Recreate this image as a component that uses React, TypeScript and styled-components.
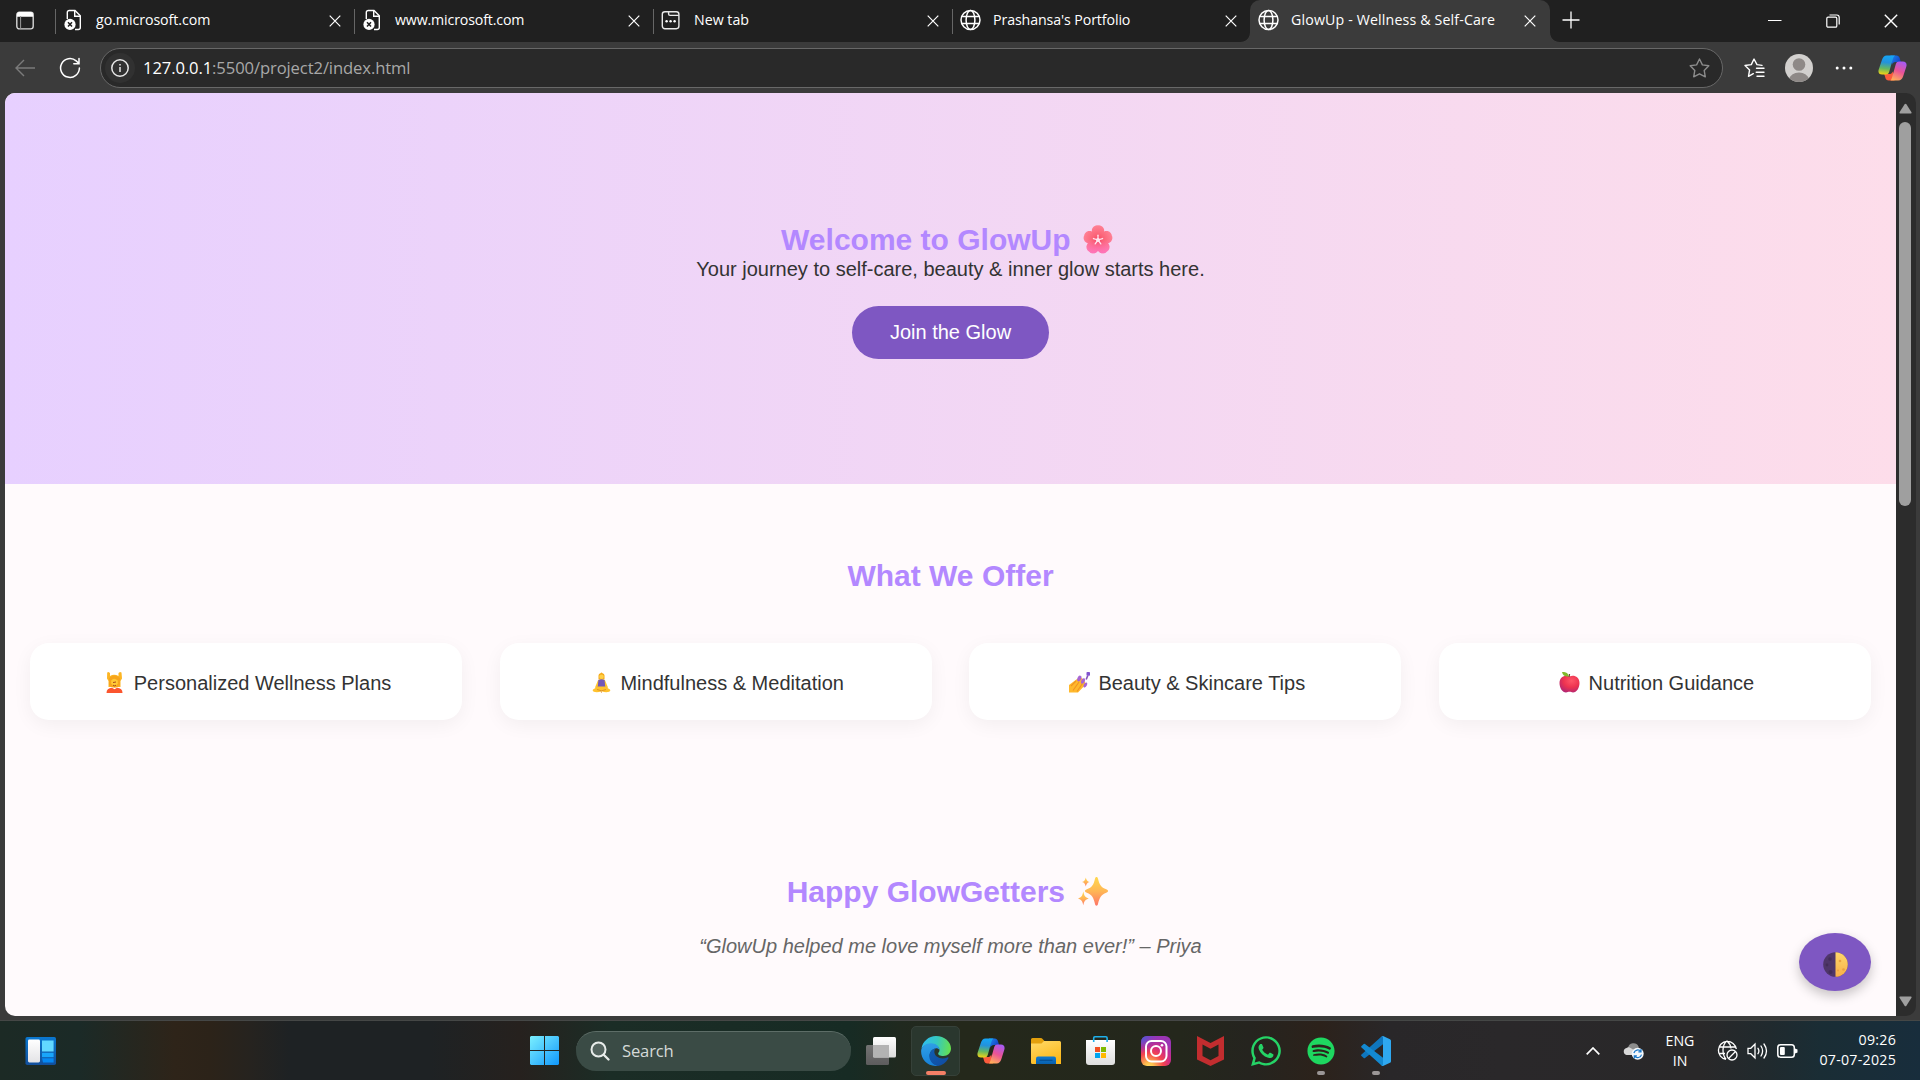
import React from 'react';
import styled, { createGlobalStyle } from 'styled-components';
import { FaWhatsapp, FaSpotify } from 'react-icons/fa';

const ui = "'Open Sans', 'Noto Sans', sans-serif";
const arial = "'Liberation Sans', Arial, sans-serif";

const Global = createGlobalStyle`
  * { box-sizing: border-box; }
  body { margin: 0; background: #3b3b3b; overflow: hidden; }
  h1, h2, p { margin: 0; }
  button { border: 0; padding: 0; background: none; font: inherit; color: inherit; }
  svg { display: block; flex: none; }
`;

const Screen = styled.div`
  width: 1920px;
  height: 1080px;
  display: flex;
  flex-direction: column;
  overflow: hidden;
  background: #3b3b3b;
`;

/* ---------- tab strip ---------- */
const TabStrip = styled.div`
  height: 42px;
  display: flex;
  background: #202020;
  color: #fff;
  font-family: ${ui};
`;
const TabActions = styled.div`
  width: 55px;
  height: 42px;
  padding: 11px 0 0 16px;
`;
const Tab = styled.div<{ $active?: boolean; $w: number }>`
  width: ${p => p.$w}px;
  height: 42px;
  display: flex;
  align-items: flex-start;
  padding-left: ${p => (p.$active ? 8 : 0)}px;
  background: ${p => (p.$active ? '#3b3b3b' : 'transparent')};
  border-radius: 10px 10px 0 0;
`;
const Divider = styled.i`
  width: 1px;
  height: 25px;
  margin: 9px 7px 0 0;
  background: #666;
`;
const Favicon = styled.span`
  width: 22px;
  padding-top: 9px;
`;
const TabTitle = styled.span<{ $ls?: number }>`
  flex: 1;
  margin-left: 11px;
  font-size: 14.2px;
  line-height: 20px;
  padding-top: 10px;
  white-space: nowrap;
  letter-spacing: ${p => p.$ls ?? 0}px;
`;
const TabClose = styled.button<{ $r?: number }>`
  padding-top: 15px;
  margin-right: ${p => p.$r ?? 13}px;
`;
const Flare = styled.i<{ $side: 'l' | 'r' }>`
  width: 9px;
  height: 42px;
  margin-left: ${p => (p.$side === 'l' ? -9 : 0)}px;
  background: radial-gradient(circle at ${p => (p.$side === 'l' ? '0' : '9px')} 0, #202020 8.4px, #3b3b3b 9.2px) bottom / 9px 9px no-repeat;
`;
const NewTab = styled.button`
  width: 20px;
  display: flex;
  align-items: flex-start;
  padding-top: 11px;
  margin-left: 3px;
`;
const WindowButtons = styled.div`
  margin-left: auto;
  display: flex;
  padding: 14px 22px 0 0;
  gap: 44px;
`;

/* ---------- address row ---------- */
const Toolbar = styled.div`
  height: 51px;
  display: flex;
  align-items: center;
  padding: 0 13px 0 15px;
  color: #fff;
`;
const NavButton = styled.button<{ $ml?: number }>`
  margin-left: ${p => p.$ml ?? 0}px;
`;
const AddressBar = styled.div`
  width: 1625px;
  height: 40px;
  margin-left: 19px;
  display: flex;
  align-items: center;
  border: 1.5px solid #686868;
  border-radius: 20px;
  background: #292929;
  padding: 0 12px 0 4px;
`;
const InfoBadge = styled.span`
  width: 30px;
  height: 30px;
  display: grid;
  place-items: center;
  border-radius: 50%;
  background: #313131;
`;
const Url = styled.span`
  flex: 1;
  margin-left: 8px;
  color: #a8a8a8;
  font: 16.6px/24px ${ui};
  letter-spacing: -0.1px;
  b { color: #fff; font-weight: 400; }
`;

/* ---------- web page ---------- */
const Viewport = styled.div`
  height: 923px;
  margin: 0 4px 0 5px;
  display: flex;
`;
const Page = styled.main`
  position: relative;
  width: 1891px;
  height: 923px;
  overflow: hidden;
  border-radius: 10px 0 0 10px;
  background: #fffafc;
  font-family: ${arial};
  font-size: 20px;
  line-height: 23px;
  color: #333;
  text-align: center;
`;
const Hero = styled.header`
  height: 391px;
  padding-top: 129px;
  display: flex;
  flex-direction: column;
  align-items: center;
  background: linear-gradient(to right, #e7d0ff, #fdddea);
`;
const Tagline = styled.p`
  margin-top: 1px;
`;
const Heading = styled.h1`
  display: flex;
  justify-content: center;
  height: 35px;
  font-size: 30px;
  line-height: 35px;
  font-weight: 700;
  color: #b388ff;
  white-space: pre;
`;
const HeadingEmoji = styled.span`
  width: 41px;
  display: flex;
  justify-content: center;
  padding: 3px 2px 0 0;
`;
const JoinButton = styled.button`
  width: 197px;
  height: 53px;
  margin-top: 25px;
  border-radius: 31px;
  background: #7e57c2;
  color: #fff;
`;
const Offers = styled.section`
  height: 315px;
  padding: 74px 25px 0;
`;
const CardGrid = styled.div`
  display: grid;
  grid-template-columns: repeat(4, 1fr);
  gap: 37.5px;
  margin-top: 50px;
`;
const Card = styled.div`
  height: 77px;
  display: flex;
  justify-content: center;
  align-items: center;
  padding-top: 3px;
  white-space: pre;
  background: #fff;
  border-radius: 19px;
  box-shadow: 0 5px 19px rgba(0, 0, 0, 0.05);
`;
const CardEmoji = styled.span`
  width: 27.4px;
  margin-top: -2px;
  display: flex;
  justify-content: center;
`;
const Testimonials = styled.section`
  padding-top: 75px;
`;
const Quote = styled.p`
  margin-top: 26px;
  font-style: italic;
  color: #666;
`;
const ThemeToggle = styled.button`
  position: absolute;
  right: 25px;
  bottom: 25px;
  width: 72px;
  height: 58px;
  display: grid;
  place-items: center;
  padding-top: 5px;
  border-radius: 50%;
  background: #7e57c2;
  box-shadow: 0 5px 12px rgba(0, 0, 0, 0.22);
`;
const Scrollbar = styled.div`
  width: 20px;
  height: 923px;
  display: flex;
  flex-direction: column;
  align-items: center;
  padding: 10px 2px 9px 0;
  background: #2c2c2c;
  border-radius: 0 10px 10px 0;
`;
const Thumb = styled.div`
  width: 12px;
  height: 384px;
  margin: 8px 0 auto;
  border-radius: 6px;
  background: #9f9f9f;
`;

/* ---------- taskbar ---------- */
const Taskbar = styled.footer`
  height: 60px;
  margin-top: 4px;
  display: flex;
  align-items: center;
  border-top: 1px solid #454746;
  font-family: ${ui};
  color: #fff;
  background: linear-gradient(to right, #1c2a25 0, #1b2a27 80px, #2e2419 175px, #2c2319 210px, #26231f 250px, #1e2224 290px, #1e2224 430px, #26211e 520px, #1b2d26 610px, #172b24 850px, #20291f 900px, #24281b 960px, #24271c 1180px, #25241f 1250px, #2c221b 1320px, #292729 1390px, #2a282a 1500px, #292829 1700px, #202a2e 1770px, #1a2d35 1820px, #182d3c 1920px);
`;
const Widgets = styled.div`
  width: 505px;
  padding-left: 25px;
`;
const StartButton = styled.button`
  width: 29px;
  margin: 0 17px 0 25px;
`;
const SearchBox = styled.div`
  width: 275px;
  height: 40px;
  display: flex;
  align-items: center;
  padding-left: 14px;
  border-radius: 20px;
  border-top: 1px solid #5d6d67;
  background: #3a4b45;
  color: #d5dad8;
  font-size: 16.6px;
  gap: 12px;
`;
const SearchLabel = styled.span`
  line-height: 22px;
  letter-spacing: -0.15px;
`;
const AppRow = styled.div`
  display: flex;
  margin-left: 2px;
`;
const AppCell = styled.div<{ $active?: boolean }>`
  width: 49px;
  height: 50px;
  margin: 0 3px;
  display: flex;
  flex-direction: column;
  align-items: center;
  padding-top: 9px;
  border: 1px solid ${p => (p.$active ? '#364139' : 'transparent')};
  border-radius: 5px;
  background: ${p => (p.$active ? '#2a372e' : 'transparent')};
`;
const IconSlot = styled.div`
  height: 30px;
  display: flex;
  align-items: center;
  justify-content: center;
`;
const Indicator = styled.i<{ $active?: boolean }>`
  width: ${p => (p.$active ? 20 : 8)}px;
  height: 4px;
  margin-top: 5px;
  border-radius: 2px;
  background: ${p => (p.$active ? '#f47f66' : '#9b9696')};
`;
const Tray = styled.div`
  margin-left: auto;
  display: flex;
  align-items: center;
  padding-right: 24px;
`;
const TrayText = styled.div<{ $w: number; $ml: number; $end?: boolean; $ls?: number }>`
  width: ${p => p.$w}px;
  margin: 0 0 ${p => (p.$end ? 1 : 0)}px ${p => p.$ml}px;
  font-size: 14.2px;
  line-height: 20px;
  text-align: ${p => (p.$end ? 'right' : 'center')};
  letter-spacing: ${p => p.$ls ?? 0}px;
  white-space: nowrap;
`;
const TrayIcon = styled.span<{ $ml: number }>`
  margin-left: ${p => p.$ml}px;
`;

/* ---------- line icons ---------- */
const Cross = ({ s = 12 }: { s?: number }) => (
  <svg width={s} height={s} viewBox="0 0 12 12" stroke="#fff" strokeWidth="1.2" fill="none">
    <path d="M.7.7l10.6 10.6M11.3.7L.7 11.3" />
  </svg>
);
const Globe = () => (
  <svg width="22" height="22" viewBox="0 0 22 22" stroke="#fff" strokeWidth="1.5" fill="none">
    <circle cx="10.500" cy="11" r="9.5" />
    <ellipse cx="10.500" cy="11" rx="4.4" ry="9.5" />
    <path d="M1.800 7.6h17.4M1.800 14.4h17.4" />
  </svg>
);
const BrokenPage = () => (
  <svg width="22" height="22" viewBox="0 0 22 22" fill="none">
    <path d="M4.3 10V3.5A2 2 0 0 1 6.3 1.5H12l5.300 5.3v11.7a2 2 0 0 1-2 2H12" stroke="#fff" strokeWidth="1.4" />
    <path d="M11.7 1.8v5.4h5.4" stroke="#fff" strokeWidth="1.4" />
    <circle cx="7" cy="15.4" r="5.6" fill="#fff" />
    <path d="M5 13.3l4 4.2M9 13.3l-4 4.2" stroke="#202020" strokeWidth="1.5" />
  </svg>
);
const NewTabPage = () => (
  <svg width="20" height="22" viewBox="0 0 20 22" stroke="#e8e8e8" strokeWidth="1.4" fill="none">
    <rect x="1.3" y="2.7" width="16.6" height="17" rx="2.6" />
    <path d="M7.6 2.7V5a1.4 1.4 0 0 0 1.4 1.4h8.8" />
    <g fill="#fff" stroke="none">
      <circle cx="5.6" cy="12.2" r="1.2" /><circle cx="9.6" cy="12.2" r="1.2" /><circle cx="13.6" cy="12.2" r="1.2" />
    </g>
  </svg>
);
const TabMenu = () => (
  <svg width="18" height="19" viewBox="0 0 18 19" fill="none">
    <rect x=".8" y="1.3" width="16.4" height="16.6" rx="2.6" stroke="#d6d6d6" strokeWidth="1.4" />
    <path d="M1 5.8V3.5A2.5 2.5 0 0 1 3.5 1h11A2.5 2.5 0 0 1 17 3.5v2.3z" fill="#fff" />
    <path d="M4.6 5v13" stroke="#9a9a9a" strokeWidth="1" />
  </svg>
);
const Star = ({ lines }: { lines?: boolean }) =>
  lines ? (
    <svg width="21" height="20" viewBox="0 0 21 20" fill="none" stroke="#fff" strokeWidth="1.4" strokeLinejoin="round" strokeLinecap="round">
      <path d="M18 7.400L13 6.6 10 1 7.3 6.6 1 7.5l4.6 4.4-1.1 6.4 4.800-2.600M12.500 10.200h7.500M12.200 14.300H20M13 18.300h7" />
    </svg>
  ) : (
    <svg width="21" height="20" viewBox="0 0 21 20" fill="none" stroke="#8c8c8c" strokeWidth="1.4" strokeLinejoin="round">
      <path d="M10.5 1l2.9 5.9 6.4.9-4.6 4.6 1.1 6.4-5.8-3-5.8 3 1.1-6.4L1.2 7.800l6.400-.9z" />
    </svg>
  );
const Avatar = () => (
  <svg width="28" height="28" viewBox="0 0 28 28">
    <clipPath id="av"><circle cx="14" cy="14" r="14" /></clipPath>
    <g clipPath="url(#av)">
      <rect width="28" height="28" fill="#d2d0ce" />
      <circle cx="14" cy="10.500" r="6.300" fill="#8e8987" />
      <ellipse cx="14" cy="25" rx="9.500" ry="6.500" fill="#8e8987" />
    </g>
  </svg>
);
const Arrow = ({ down }: { down?: boolean }) => (
  <svg width="13" height="11" viewBox="0 0 14 11" preserveAspectRatio="none">
    <path d={down ? 'M1 .5h12q1 .2.4 1.200L8 9.800q-1 1-2 0L.6 1.700Q0 .7 1 .5z' : 'M1 10.500h12q1-.2.4-1.200L8 1.200q-1-1-2 0L.6 9.300q-.6 1 .4 1.200z'} fill="#9f9f9f" />
  </svg>
);

/* ---------- brand icons ---------- */
const Copilot = ({ id, w = 28, h = 26 }: { id: string; w?: number; h?: number }) => (
  <svg width={w} height={h} viewBox="0 0 28 26" preserveAspectRatio="none">
    <defs>
      <linearGradient id={id + 'a'} x1=".4" y1="0" x2=".3" y2="1">
        <stop offset="0" stopColor="#15a5f5" /><stop offset=".35" stopColor="#2392dc" /><stop offset=".68" stopColor="#65b860" /><stop offset="1" stopColor="#f5d313" />
      </linearGradient>
      <linearGradient id={id + 'b'} x1=".7" y1="0" x2=".3" y2="1">
        <stop offset="0" stopColor="#a75af2" /><stop offset=".5" stopColor="#ea5396" /><stop offset="1" stopColor="#ffad5a" />
      </linearGradient>
      <linearGradient id={id + 'c'} x1="0" y1="0" x2="1" y2=".6">
        <stop offset="0" stopColor="#1c8bf0" /><stop offset="1" stopColor="#153fc4" />
      </linearGradient>
    </defs>
    <path d="M12 .5h5.800c1.600 0 2.600 1 3.100 2.600l1.200 4H17c-2 0-3 1-3.500 2.600z" fill={`url(#${id}c)`} />
    <path d="M16 25.500h-5.700c-1.800 0-2.700-1-3.200-2.700L6 19h4.500c2 0 3.200-1 3.700-2.600z" fill="#fb5b3c" />
    <path d="M16.500 .5H8.500C6 .5 4.600 2.500 3.800 5L.7 14.500C-.2 17.500 1 19.600 4 19.600h3.600c2 0 2.700-1.200 3.300-3l3.300-12C14.800 2.700 15.200 1.200 16.500 .5z" fill={`url(#${id}a)`} />
    <path d="M12 25.500h7.500c2.600 0 4-1.800 4.800-4.300l3-9.500c.9-3-.3-5.100-3.300-5.100h-3.600c-2 0-2.700 1.200-3.300 3l-3.300 12c-.5 1.800-.8 3.100-1.800 3.900z" fill={`url(#${id}b)`} />
  </svg>
);
const WidgetsIcon = () => (
  <svg width="31" height="28" viewBox="0 0 31 28">
    <defs>
      <linearGradient id="wg" x2="0" y2="1"><stop stopColor="#0a78d0" /><stop offset="1" stopColor="#124f9c" /></linearGradient>
      <linearGradient id="wh" x2="0" y2="1"><stop stopColor="#fff" /><stop offset="1" stopColor="#e3e3e6" /></linearGradient>
    </defs>
    <rect x=".5" width="30.500" height="28" rx="1.800" fill="url(#wg)" />
    <rect x="3" y="2.500" width="12" height="23" rx="1.400" fill="url(#wh)" />
    <path d="M17 3.500h11.600v11H17z" fill="#62d8ff" />
    <path d="M17 15.800h11.600v4.400H17z" fill="#19a5fb" />
    <path d="M17 21.300h11.600v4.200H18z" fill="#0588f3" />
  </svg>
);
const WindowsIcon = () => (
  <svg width="29" height="29" viewBox="0 0 29 29">
    <defs><linearGradient id="wn" gradientUnits="userSpaceOnUse" x1="0" y1="0" x2="29" y2="29"><stop stopColor="#7af0ff" /><stop offset=".5" stopColor="#48c4fd" /><stop offset="1" stopColor="#0f97fb" /></linearGradient></defs>
    <path d="M1 0h13v14H0V1zM15 0h13l1 1v13H15zM0 15h14v14H1l-1-1zM15 15h14v13l-1 1H15z" fill="url(#wn)" />
  </svg>
);
const TaskView = () => (
  <svg width="30" height="28" viewBox="0 0 30 28">
    <defs>
      <linearGradient id="tv" x2="0" y2="1"><stop stopColor="#fff" /><stop offset="1" stopColor="#dcdcdc" /></linearGradient>
      <linearGradient id="tw" x2="0" y2="1"><stop stopColor="#737373" /><stop offset="1" stopColor="#5d5c5d" /></linearGradient>
    </defs>
    <rect y="8" width="23" height="20" rx="1.500" fill="url(#tw)" />
    <rect x="7" width="23" height="20.500" rx="1.500" fill="url(#tv)" />
    <path d="M7 8h16v12.500H8.500a1.500 1.500 0 0 1-1.500-1.500z" fill="#b3b3b3" />
  </svg>
);
const EdgeIcon = () => (
  <svg width="30" height="30" viewBox="0 0 30 30">
    <defs>
      <linearGradient id="ea" x1="0" y1=".4" x2="1" y2=".5"><stop stopColor="#2fbcf2" /><stop offset=".5" stopColor="#35c8c0" /><stop offset="1" stopColor="#66e04e" /></linearGradient>
      <linearGradient id="eb" x1=".3" y1="0" x2=".4" y2="1"><stop stopColor="#30a0e6" /><stop offset="1" stopColor="#1680d8" /></linearGradient>
      <linearGradient id="ec" x1="0" y1="0" x2="1" y2="1"><stop stopColor="#0f5eb5" /><stop offset="1" stopColor="#114a9e" /></linearGradient>
    </defs>
    <path d="M.5 12.500C1.500 5.500 7.700 0 15 0c8.600 0 15 6 15 12.500 0 4.500-3.400 7.400-7.600 7.400-3.600 0-5.600-1.400-5.200-2.500.4-1 1.300-1.500 1.300-3.300 0-2.800-3-6.100-8-6.100C6 8 2.500 9.500.5 12.500z" fill="url(#ea)" />
    <path d="M.1 15C.5 10.300 4.500 7.200 10 7.200c5 0 8.600 3 8.500 6.800-1-1.400-2.600-2-4-1.600C9.800 13.500 8 17.500 9 21.500c1 4 4 7 8 8.200-1 .2-1.500.3-2.500.3C6 29.700 0 23 .1 15z" fill="url(#eb)" />
    <path d="M14.500 12.300c-2 2.600-1.200 6.300 1.200 8.300 3 2.400 7.600 2.400 10.600.8.800-.4 1.500.3 1 1.100C24.800 26.800 21 29.500 17 30c-5-1-8.700-5-8.700-9.700 0-4 2.700-7 6.200-8z" fill="url(#ec)" />
  </svg>
);
const Explorer = () => (
  <svg width="30" height="26" viewBox="0 0 30 26">
    <defs>
      <linearGradient id="fx" x2=".5" y2="1"><stop stopColor="#ffda69" /><stop offset="1" stopColor="#fcb91c" /></linearGradient>
      <linearGradient id="fy" x2="0" y2="1"><stop stopColor="#0f7ad0" /><stop offset="1" stopColor="#0860ae" /></linearGradient>
    </defs>
    <path d="M0 1.500Q0 0 1.500 0h8q1.500 0 2.300 1.200L13.500 3H29v8H0z" fill="#e3a00d" />
    <path d="M0 5.500h10.500L13 3h15.500Q30 3 30 4.500V26H1.500Q0 26 0 24.500z" fill="url(#fx)" />
    <path d="M5 26v-5.500Q5 18.500 7 18.500h16q2 0 2 2V26z" fill="url(#fy)" />
    <path d="M8.500 22.300h13" stroke="#064f91" strokeWidth="1.200" />
  </svg>
);
const Store = () => (
  <svg width="29" height="29" viewBox="0 0 29 29">
    <defs><linearGradient id="ms" x2="0" y2="1"><stop stopColor="#fff" /><stop offset="1" stopColor="#dedede" /></linearGradient></defs>
    <path d="M7.700 5.500V2q0-1.200 1.200-1.200h11q1.200 0 1.200 1.200v3.500" fill="none" stroke="#1fb0ea" strokeWidth="1.600" />
    <path d="M0 4h29v22q0 3-3 3H3q-3 0-3-3z" fill="url(#ms)" />
    <path d="M7.700 4v2M21.100 4v2" stroke="#1fb0ea" strokeWidth="1.600" />
    <path d="M9 11h5v5H9z" fill="#f25022" /><path d="M15 11h5v5h-5z" fill="#7fba00" />
    <path d="M9 17h5v5H9z" fill="#00a4ef" /><path d="M15 17h5v5h-5z" fill="#ffb900" />
  </svg>
);
const Instagram = () => (
  <svg width="30" height="30" viewBox="0 0 30 30">
    <defs>
      <radialGradient id="ig" cx=".27" cy="1.050" r="1"><stop stopColor="#ffdc66" /><stop offset=".15" stopColor="#fec34f" /><stop offset=".48" stopColor="#f4454e" /><stop offset=".72" stopColor="#d02b84" /><stop offset="1" stopColor="#9a35b4" /></radialGradient>
      <radialGradient id="ih" cx="0" cy="0" r=".6"><stop stopColor="#3e62dc" /><stop offset="1" stopColor="#8038c8" stopOpacity="0" /></radialGradient>
    </defs>
    <rect width="30" height="30" rx="6" fill="url(#ig)" /><rect width="30" height="30" rx="6" fill="url(#ih)" />
    <g fill="none" stroke="#fff" strokeWidth="2"><rect x="5" y="5" width="20.500" height="20.500" rx="5.500" /><circle cx="15" cy="15" r="5" /></g>
    <circle cx="21" cy="9.300" r="1.300" fill="#fff" />
  </svg>
);
const McAfee = () => (
  <svg width="27" height="30" viewBox="0 0 27 30">
    <path d="M0 0l13.500 7L27 0v23.500L13.500 30 0 23.500zM5.500 8.500V20l8 4.300 8-4.300V8.500l-8 4.200z" fill="#c22d2f" fillRule="evenodd" />
  </svg>
);
const VSCode = () => (
  <svg width="30" height="30" viewBox="0 0 30 30">
    <path d="M22 0v8.200L4 22q-.7.500-1.300 0L.5 20q-.8-.8 0-1.500L20.500.5Q21 0 22 0z" fill="#0f76be" />
    <path d="M22 30v-8.200L4 8q-.7-.5-1.300 0L.5 10q-.8.800 0 1.500L20.500 29.500q.500.500 1.500.500z" fill="#1389d1" />
    <path d="M22 0l7 3.200q1 .5 1 1.600v20.400q0 1.100-1 1.600L22 30q-1 .2-1.700-.6 1.700.8 1.700-1.200V1.800q0-2-1.700-1.200Q21-.2 22 0z" fill="#2fa8f0" />
  </svg>
);

/* ---------- emoji ---------- */
const Blossom = () => (
  <svg width="30" height="29" viewBox="0 0 30 29">
    <defs><radialGradient id="bl" gradientUnits="userSpaceOnUse" cx="15" cy="15" r="15"><stop stopColor="#f43f5e" /><stop offset=".35" stopColor="#fb6377" /><stop offset="1" stopColor="#ff8296" /></radialGradient>
      <linearGradient id="bm" gradientUnits="userSpaceOnUse" x1="0" y1="0" x2="0" y2="29"><stop offset=".5" stopColor="#ff70c8" stopOpacity="0" /><stop offset="1" stopColor="#ff70c8" stopOpacity=".8" /></linearGradient>
      <clipPath id="bp">
        {[0, 72, 144, 216, 288].map(a => (
          <path key={a} transform={`rotate(${a} 15 15)`} d="M15 16C9.500 12.500 7.500 6.500 9.500 3 11 .8 13.500 0 15 .5c1.500-.5 4 .3 5.500 2.500 2 3.500 0 9.500-5.500 13z" />
        ))}
      </clipPath></defs>
    <g clipPath="url(#bp)"><rect width="30" height="29" fill="url(#bl)" /><rect width="30" height="29" fill="url(#bm)" /></g>
    <g stroke="#ffe4ef" strokeWidth="1.300" strokeLinecap="round">
      {[0, 72, 144, 216, 288].map(a => <path key={a} transform={`rotate(${a} 15 15)`} d="M15 15v-4.800" />)}
    </g>
    <circle cx="15" cy="15" r="2" fill="#ffe4ef" />
  </svg>
);
const Sparkles = () => (
  <svg width="30" height="29" viewBox="0 0 30 29">
    <defs><linearGradient id="sp" x2="0" y2="1"><stop stopColor="#ffd84f" /><stop offset=".5" stopColor="#ffb655" /><stop offset="1" stopColor="#ff7468" /></linearGradient></defs>
    <g fill="url(#sp)">
      <path d="M18.500 0c.8 0 1.200.7 1.500 1.700 1.500 6 3 8.500 8.300 10.600 1.200.5 1.700 1 1.700 1.700s-.5 1.300-1.700 1.700c-5.300 2-6.800 5-8.300 11.300-.3 1-.7 1.700-1.500 1.700s-1.200-.7-1.500-1.700c-1.400-6.300-2.900-9.300-8.200-11.300-1.200-.4-1.800-1-1.800-1.700s.6-1.200 1.800-1.700c5.300-2.100 6.800-4.600 8.200-10.600.3-1 .7-1.700 1.500-1.700z" />
      <path d="M7.800.5c.8 3 1.400 3.700 3.900 4.500-2.500.8-3.100 1.500-3.900 4.500C7 6.500 6.400 5.800 4 5c2.400-.8 3-1.500 3.800-4.500z" />
      <path d="M5.300 14.500c.9 4.500 2 6 5.500 7-3.500 1-4.600 2.500-5.500 6.700-.9-4.200-1.900-5.700-5.300-6.700 3.400-1 4.400-2.500 5.300-7z" />
    </g>
  </svg>
);
const MassageEmoji = () => (
  <svg width="17" height="21" viewBox="0 0 17 21">
    <path d="M2.500 0L4 1v3q4-2.500 8.500 0V1L14 0l1.500.5.5 6-1.500 2.500V15h-12V9L1 6.500 1.200.5z" fill="#fcb524" />
    <path d="M3 6Q8.500 1 14 6v7.500q-5 4.500-11 0z" fill="#f7a51c" />
    <path d="M5.200 8.500q2.500-3.500 6.600 0v3q-3 5-6.600 0z" fill="#ffc936" />
    <path d="M7 10.500l3-.5M7 13.200q1.500 1.200 3 0" stroke="#9b3b18" strokeWidth=".9" fill="none" />
    <path d="M.5 21q0-5 5.500-5.300l2.500 1.500 2.500-1.500q5.500.3 5.500 5.300z" fill="#fb552e" />
  </svg>
);
const LotusEmoji = () => (
  <svg width="19" height="21" viewBox="0 0 19 21">
    <path d="M6.500 3.500q0-2 2-2.300 1-1.400 2 0 2 .3 2 2.300v4h-6z" fill="#f5a818" />
    <circle cx="9.500" cy="4.700" r="2.300" fill="#ffd046" />
    <path d="M6 8.200L9.500 7 13 8.200l3 7.300-3 2-7 0-3-2z" fill="#ffc52e" />
    <path d="M6.400 8Q9.500 6.500 12.600 8l.7 7.500H5.700z" fill="#7357b8" />
    <path d="M1 17.500L6 14.500h7l5 3q1 1.500-.8 2.300-3.700 1-7.700-.6-4 1.600-7.700.6Q0 19 1 17.500z" fill="#ffc22e" />
    <path d="M5 17.500l4.500 1.300 4.500-1.300M9 19.200l.5 1.500" stroke="#db8d25" strokeWidth=".9" fill="none" />
  </svg>
);
const NailsEmoji = () => (
  <svg width="21" height="21" viewBox="0 0 21 21">
    <path d="M0 20.500V13L8 7l4.500-1 2.700 2 1.500 4.500L9 20.500z" fill="#ffb92c" />
    <path d="M4 18.500l6-8.500M8 19.500l5.500-8M2 14l5-5" stroke="#f19323" strokeWidth="1.100" />
    <g fill="#a866d2"><ellipse cx="10.300" cy="6.500" rx="1.900" ry="3" transform="rotate(25 10.300 6.500)" /><ellipse cx="14" cy="9" rx="1.700" ry="3" transform="rotate(25 14 9)" /><ellipse cx="16.300" cy="13" rx="1.600" ry="2.800" transform="rotate(30 16.300 13)" /></g>
    <path d="M18.800 3.500l-1.600 4" stroke="#8550b8" strokeWidth="1.600" /><rect x="17.500" width="3.500" height="3.800" rx=".8" fill="#8254cf" />
  </svg>
);
const AppleEmoji = () => (
  <svg width="21" height="21" viewBox="0 0 21 21">
    <defs><radialGradient id="ap" cx=".6" cy=".3" r=".8"><stop stopColor="#ff5668" /><stop offset=".5" stopColor="#ed3350" /><stop offset="1" stopColor="#a82479" /></radialGradient></defs>
    <path d="M10.500 4.500C14 2.500 20.500 4 20.500 11c0 5-3 9.500-6.500 9.500-1.500 0-2-.7-3.500-.7s-2 .7-3.500.7C3.500 20.500.5 16 .5 11c0-7 6.500-8.500 10-6.500z" fill="url(#ap)" />
    <path d="M10 5l.5-3" stroke="#70452f" strokeWidth="1.300" />
    <path d="M3 0Q9-.5 9.800 4.500 4 5 3 0z" fill="#80b92c" />
  </svg>
);
const MoonEmoji = () => (
  <svg width="25" height="25" viewBox="0 0 25 25">
    <defs><linearGradient id="mn" x2="0" y2="1"><stop stopColor="#ffd76a" /><stop offset="1" stopColor="#f9ae49" /></linearGradient></defs>
    <circle cx="12.500" cy="12.500" r="12.300" fill="#4f3669" />
    <path d="M12.500.2a12.300 12.300 0 0 1 0 24.600z" fill="url(#mn)" />
    <g fill="#432d58"><circle cx="7" cy="7" r="1.800" /><circle cx="4" cy="13" r="1.400" /><circle cx="7.500" cy="20" r="2" /></g>
    <g fill="#eca040"><circle cx="17" cy="9" r="1.300" /><circle cx="20.500" cy="17.500" r="1.300" /><circle cx="15" cy="18.500" r=".9" /></g>
  </svg>
);

const tabs = [
  { title: 'go.microsoft.com', icon: <BrokenPage />, ls: -0.05 },
  { title: 'www.microsoft.com', icon: <BrokenPage />, ls: -0.15 },
  { title: 'New tab', icon: <NewTabPage />, ls: 0 },
  { title: "Prashansa's Portfolio", icon: <Globe />, ls: -0.1 },
];
const offers = [
  { label: ' Personalized Wellness Plans', emoji: <MassageEmoji /> },
  { label: ' Mindfulness & Meditation', emoji: <LotusEmoji /> },
  { label: ' Beauty & Skincare Tips', emoji: <NailsEmoji /> },
  { label: ' Nutrition Guidance', emoji: <AppleEmoji /> },
];
const apps: { name: string; icon: React.ReactNode; active?: boolean; open?: boolean }[] = [
  { name: 'taskview', icon: <TaskView /> },
  { name: 'edge', icon: <EdgeIcon />, active: true, open: true },
  { name: 'copilot', icon: <Copilot id="t" /> },
  { name: 'files', icon: <Explorer /> },
  { name: 'store', icon: <Store /> },
  { name: 'instagram', icon: <Instagram /> },
  { name: 'mcafee', icon: <McAfee /> },
  { name: 'whatsapp', icon: <FaWhatsapp size={34} color="#25d366" /> },
  { name: 'spotify', icon: <FaSpotify size={28} color="#1ed760" />, open: true },
  { name: 'code', icon: <VSCode />, open: true },
];

export default function App() {
  return (
    <Screen>
      <Global />
      <TabStrip>
        <TabActions><TabMenu /></TabActions>
        {tabs.map((t, i) => (
          <Tab key={t.title} $w={i === 3 ? 298 : 299}>
            <Divider />
            <Favicon>{t.icon}</Favicon>
            <TabTitle $ls={t.ls}>{t.title}</TabTitle>
            <TabClose><Cross /></TabClose>
          </Tab>
        ))}
        <Flare $side="l" />
        <Tab $active $w={300}>
          <Favicon><Globe /></Favicon>
          <TabTitle $ls={0.15}>GlowUp - Wellness &amp; Self-Care</TabTitle>
          <TabClose $r={14}><Cross /></TabClose>
        </Tab>
        <Flare $side="r" />
        <NewTab>
          <svg width="18" height="18" viewBox="0 0 18 18" stroke="#fff" strokeWidth="1.300"><path d="M9 .5v17M.5 9h17" /></svg>
        </NewTab>
        <WindowButtons>
          <svg width="14" height="14" viewBox="0 0 14 14"><path d="M0 6.500h13.500" stroke="#fff" /></svg>
          <svg width="14" height="14" viewBox="0 0 14 14" fill="none" stroke="#fff" strokeWidth="1.200"><rect x=".8" y="3.200" width="10" height="10" rx="1.300" /><path d="M3.500 1h7.300q2.400 0 2.400 2.400v7" /></svg>
          <Cross s={14} />
        </WindowButtons>
      </TabStrip>
      <Toolbar>
        <NavButton>
          <svg width="20" height="18" viewBox="0 0 20 18" fill="none" stroke="#7b7b7b" strokeWidth="1.400"><path d="M20 9H1M9 1L1 9l8 8" /></svg>
        </NavButton>
        <NavButton $ml={24}>
          <svg width="22" height="22" viewBox="0 0 22 22" fill="none" stroke="#fff" strokeWidth="1.500" strokeLinecap="round"><path d="M20.400 11a9.400 9.400 0 1 1-3.200-7.100L20 6.500M20 1.500v5.200h-5.200" /></svg>
        </NavButton>
        <AddressBar>
          <InfoBadge>
            <svg width="18" height="18" viewBox="0 0 18 18" fill="none" stroke="#e6e6e6" strokeWidth="1.500"><circle cx="9" cy="9" r="8.200" /><path d="M9 8v5M9 4.900v1.600" /></svg>
          </InfoBadge>
          <Url><b>127.0.0.1</b>:5500/project2/index.html</Url>
          <Star />
        </AddressBar>
        <NavButton $ml={21}><Star lines /></NavButton>
        <NavButton $ml={20}><Avatar /></NavButton>
        <NavButton $ml={22}>
          <svg width="18" height="4" viewBox="0 0 18 4" fill="#fff"><circle cx="2.200" cy="2" r="1.500" /><circle cx="9" cy="2" r="1.500" /><circle cx="15.800" cy="2" r="1.500" /></svg>
        </NavButton>
        <NavButton $ml={25}><Copilot id="b" w={29} h={26} /></NavButton>
      </Toolbar>
      <Viewport>
        <Page>
          <Hero>
            <Heading>{'Welcome to GlowUp '}<HeadingEmoji><Blossom /></HeadingEmoji></Heading>
            <Tagline>Your journey to self-care, beauty &amp; inner glow starts here.</Tagline>
            <JoinButton>Join the Glow</JoinButton>
          </Hero>
          <Offers>
            <Heading as="h2">What We Offer</Heading>
            <CardGrid>
              {offers.map(o => (
                <Card key={o.label}><CardEmoji>{o.emoji}</CardEmoji>{o.label}</Card>
              ))}
            </CardGrid>
          </Offers>
          <Testimonials>
            <Heading as="h2">{'Happy GlowGetters '}<HeadingEmoji><Sparkles /></HeadingEmoji></Heading>
            <Quote>“GlowUp helped me love myself more than ever!” – Priya</Quote>
          </Testimonials>
          <ThemeToggle><MoonEmoji /></ThemeToggle>
        </Page>
        <Scrollbar><Arrow /><Thumb /><Arrow down /></Scrollbar>
      </Viewport>
      <Taskbar>
        <Widgets><WidgetsIcon /></Widgets>
        <StartButton><WindowsIcon /></StartButton>
        <SearchBox>
          <svg width="20" height="20" viewBox="0 0 20 20" fill="none" stroke="#e8ecea" strokeWidth="2" strokeLinecap="round"><circle cx="8.500" cy="8.500" r="7" fill="#53635e" /><path d="M13.700 13.700l4.800 4.800" strokeWidth="2.300" /></svg>
          <SearchLabel>Search</SearchLabel>
        </SearchBox>
        <AppRow>
          {apps.map(a => (
            <AppCell key={a.name} $active={a.active}>
              <IconSlot>{a.icon}</IconSlot>
              {a.open && <Indicator $active={a.active} />}
            </AppCell>
          ))}
        </AppRow>
        <Tray>
          <TrayIcon $ml={0}><svg width="14" height="8" viewBox="0 0 14 8" fill="none" stroke="#fff" strokeWidth="1.700"><path d="M.7 7.300L7 1l6.300 6.300" /></svg></TrayIcon>
          <TrayIcon $ml={23}>
            <svg width="21" height="18" viewBox="0 0 21 18">
              <path d="M5 6a5.500 5.500 0 0 1 10.500-1.500Q17 8 14 10H6z" fill="#8d8d8d" />
              <path d="M3.500 13a3.600 3.600 0 0 1 0-7q2-1.500 4.500.3L17 12v1z" fill="#d8d8d8" />
              <circle cx="14.700" cy="11.800" r="6" fill="#f3f8fd" />
              <path d="M10.900 11a4 4 0 0 1 7-1.500M18.500 12.600a4 4 0 0 1-7 1.500M18 7v2.800h-2.600M11.300 16.600v-2.800h2.600" fill="none" stroke="#1877c9" strokeWidth="1.200" />
            </svg>
          </TrayIcon>
          <TrayText $w={32} $ml={20}>ENG<br />IN</TrayText>
          <TrayIcon $ml={21}>
            <svg width="21" height="21" viewBox="0 0 21 21" fill="none" stroke="#fff" strokeWidth="1.300">
              <path d="M19.300 9A9 9 0 1 0 9 19.300M1.800 7h17M1.800 13.500H8M9 19Q6 16 6 10t4-9q3.500 3 4 7.500" />
              <circle cx="15" cy="15" r="5" /><path d="M11.500 18.500l7-7" />
            </svg>
          </TrayIcon>
          <TrayIcon $ml={9}>
            <svg width="21" height="18" viewBox="0 0 21 18" fill="none" stroke="#fff" strokeWidth="1.300" strokeLinecap="round">
              <path d="M1 6.300h2.800L8 2v14l-4.200-4.300H1zM11 6.300q1.800 2.700 0 5.400M14 4q3.200 5 0 10M17 2q5 7 0 14" />
            </svg>
          </TrayIcon>
          <TrayIcon $ml={9}>
            <svg width="21" height="14" viewBox="0 0 21 14"><rect x=".8" y=".8" width="16.500" height="12.400" rx="2.800" fill="none" stroke="#fff" strokeWidth="1.500" /><rect x="3" y="3" width="4.800" height="8" rx="1" fill="#fff" /><path d="M18 4.500l2.500 1v3l-2.500 1z" fill="#fff" /></svg>
          </TrayIcon>
          <TrayText $w={90} $ml={8} $end $ls={0.25}>09:26<br />07-07-2025</TrayText>
        </Tray>
      </Taskbar>
    </Screen>
  );
}
